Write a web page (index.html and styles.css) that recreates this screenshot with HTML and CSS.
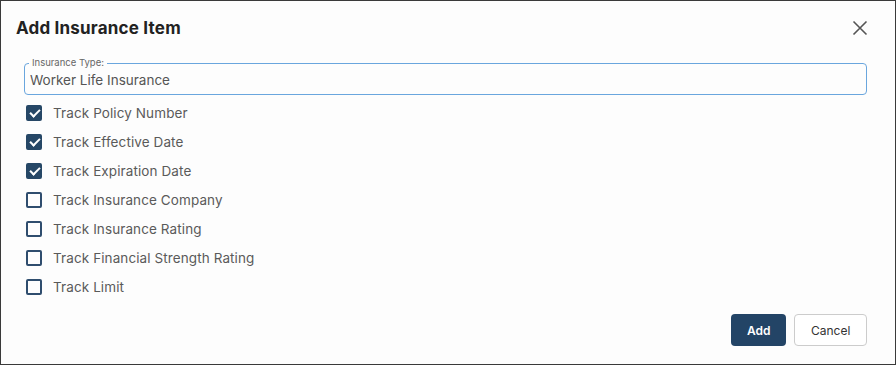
FILE: index.html
```html
<!DOCTYPE html>
<html lang="en">
<head>
    <meta charset="UTF-8">
    <title>Add Insurance Item</title>
    <link rel="stylesheet" href="styles.css">
</head>
<body>
    <div class="dialog">
        <div class="dialog-header">
            <h2>Add Insurance Item</h2>
            <button class="close-btn" aria-label="Close">
                <svg width="16" height="16" viewBox="0 0 16 16"><path d="M1.5 1.5 L14.5 14.5 M14.5 1.5 L1.5 14.5" stroke="#555" stroke-width="1.6" fill="none"/></svg>
            </button>
        </div>
        <div class="field">
            <label class="field-label">Insurance Type:</label>
            <input type="text" value="Worker Life Insurance">
        </div>
        <ul class="options">
            <li><span class="box checked"></span>Track Policy Number</li>
            <li><span class="box checked"></span>Track Effective Date</li>
            <li><span class="box checked"></span>Track Expiration Date</li>
            <li><span class="box"></span>Track Insurance Company</li>
            <li><span class="box"></span>Track Insurance Rating</li>
            <li><span class="box"></span>Track Financial Strength Rating</li>
            <li><span class="box"></span>Track Limit</li>
        </ul>
        <div class="actions">
            <button class="btn btn-primary">Add</button>
            <button class="btn btn-secondary">Cancel</button>
        </div>
    </div>
</body>
</html>
```

FILE: styles.css
```css
* {
    margin: 0;
    padding: 0;
    box-sizing: border-box;
    font-family: Inter, "Noto Sans", sans-serif;
}

body {
    background-color: #ffffff;
}

.dialog {
    width: 896px;
    height: 365px;
    border: 1px solid #3a3a3a;
    background-color: #fdfdfd;
    padding: 0 28px 0 15px;
    display: flex;
    flex-direction: column;
}

.dialog-header {
    display: flex;
    justify-content: space-between;
    align-items: center;
    height: 52px;
    padding-top: 2px;
}

.dialog-header h2 {
    font-size: 17px;
    font-weight: 700;
    letter-spacing: 0.2px;
    color: #222;
}

.close-btn {
    border: none;
    background: none;
    width: 16px;
    height: 16px;
    margin-right: -1px;
    display: flex;
}

.field {
    position: relative;
    margin-left: 8px;
    margin-top: 10px;
}

.field-label {
    position: absolute;
    top: -6px;
    left: 5px;
    padding: 0 3px;
    font-size: 9.5px;
    line-height: 11px;
    color: #666;
    background-color: #fdfdfd;
}

.field input {
    width: 100%;
    height: 32px;
    border: 1px solid #6aa6de;
    border-radius: 4px;
    background-color: #fdfdfd;
    padding: 1px 5px 0;
    font-size: 13.5px;
    color: #555;
    outline: none;
}

.options {
    list-style: none;
    margin-top: 3px;
    margin-left: 10px;
}

.options li {
    display: flex;
    align-items: center;
    height: 29px;
    font-size: 13.5px;
    letter-spacing: 0.1px;
    color: #5a5a5a;
}

.box {
    width: 16px;
    height: 16px;
    border: 2px solid #2f4d6e;
    border-radius: 2px;
    margin-right: 11px;
    position: relative;
}

.box.checked {
    background-color: #264766;
    border-color: #264766;
}

.box.checked::after {
    content: "";
    position: absolute;
    left: 3.5px;
    top: 0.5px;
    width: 4px;
    height: 8px;
    border-right: 2px solid #fff;
    border-bottom: 2px solid #fff;
    transform: rotate(45deg);
}

.actions {
    display: flex;
    justify-content: flex-end;
    gap: 8px;
    margin-top: 13px;
}

.btn {
    height: 32px;
    border-radius: 4px;
    font-size: 12px;
    padding: 0 16px;
}

.btn-primary {
    width: 55px;
    background-color: #234466;
    color: #fff;
    border: none;
    font-weight: 600;
}

.btn-secondary {
    width: 73px;
    background-color: #fff;
    color: #333;
    border: 1px solid #ccc;
}
```
